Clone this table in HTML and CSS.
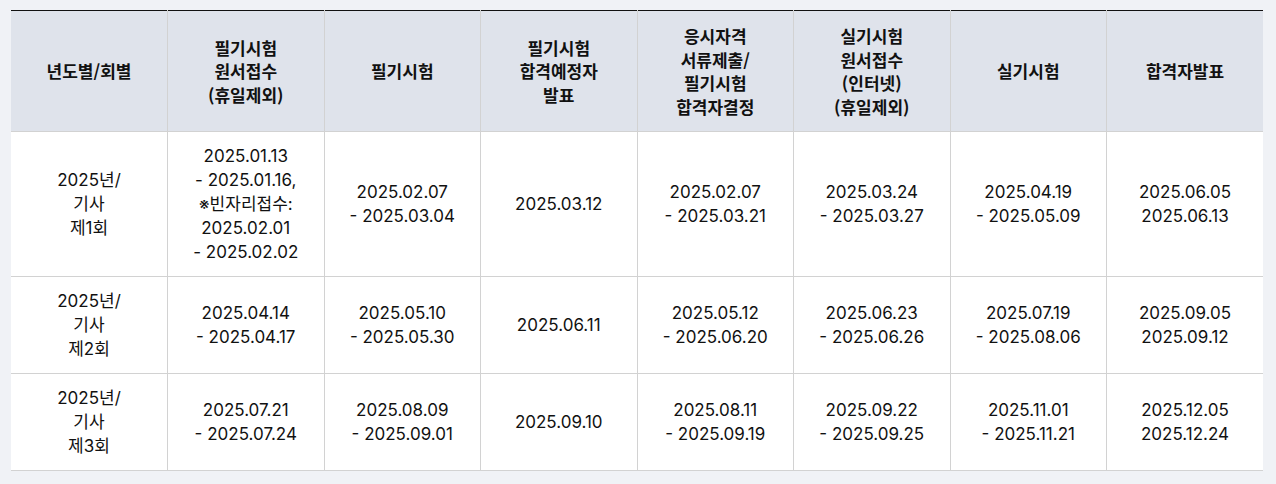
FILE: index.html
```html
<!DOCTYPE html>
<html lang="ko">
<head>
<meta charset="utf-8">
<link rel="stylesheet" href="styles.css">
</head>
<body>
<table class="sched">
  <thead>
    <tr>
      <th>년도별/회별</th>
      <th>필기시험<br>원서접수<br>(휴일제외)</th>
      <th>필기시험</th>
      <th>필기시험<br>합격예정자<br>발표</th>
      <th>응시자격<br>서류제출/<br>필기시험<br>합격자결정</th>
      <th>실기시험<br>원서접수<br>(인터넷)<br>(휴일제외)</th>
      <th>실기시험</th>
      <th>합격자발표</th>
    </tr>
  </thead>
  <tbody>
    <tr>
      <td>2025년/<br>기사<br>제1회</td>
      <td>2025.01.13<br>- 2025.01.16,<br>※빈자리접수:<br>2025.02.01<br>- 2025.02.02</td>
      <td>2025.02.07<br>- 2025.03.04</td>
      <td>2025.03.12</td>
      <td>2025.02.07<br>- 2025.03.21</td>
      <td>2025.03.24<br>- 2025.03.27</td>
      <td>2025.04.19<br>- 2025.05.09</td>
      <td>2025.06.05<br>2025.06.13</td>
    </tr>
    <tr>
      <td>2025년/<br>기사<br>제2회</td>
      <td>2025.04.14<br>- 2025.04.17</td>
      <td>2025.05.10<br>- 2025.05.30</td>
      <td>2025.06.11</td>
      <td>2025.05.12<br>- 2025.06.20</td>
      <td>2025.06.23<br>- 2025.06.26</td>
      <td>2025.07.19<br>- 2025.08.06</td>
      <td>2025.09.05<br>2025.09.12</td>
    </tr>
    <tr>
      <td>2025년/<br>기사<br>제3회</td>
      <td>2025.07.21<br>- 2025.07.24</td>
      <td>2025.08.09<br>- 2025.09.01</td>
      <td>2025.09.10</td>
      <td>2025.08.11<br>- 2025.09.19</td>
      <td>2025.09.22<br>- 2025.09.25</td>
      <td>2025.11.01<br>- 2025.11.21</td>
      <td>2025.12.05<br>2025.12.24</td>
    </tr>
  </tbody>
</table>
</body>
</html>
```
FILE: styles.css
```css
html, body {
  background: #f0f2f6;
}
body {
  margin: 10px 13px 0 11px;
  font-family: Inter, "Noto Sans CJK KR", sans-serif;
  color: #111;
}
.sched {
  width: 100%;
  table-layout: fixed;
  border-collapse: collapse;
  border-top: 1px solid #111;
  background: #fff;
}
.sched th {
  background: #dfe3eb;
  font-family: "Noto Sans CJK KR", sans-serif;
  font-weight: 700;
  font-size: 17px;
  line-height: 23.5px;
  height: 120px;
  padding: 0 6px;
  border-right: 1px solid #d2d2d2;
  border-bottom: 1px solid #d2d2d2;
  text-align: center;
  vertical-align: middle;
}
.sched td {
  font-size: 17px;
  line-height: 24px;
  padding: 12px 6px;
  border-right: 1px solid #d2d2d2;
  border-bottom: 1px solid #d2d2d2;
  text-align: center;
  vertical-align: middle;
}
.sched th:last-child, .sched td:last-child {
  border-right: none;
}
```
